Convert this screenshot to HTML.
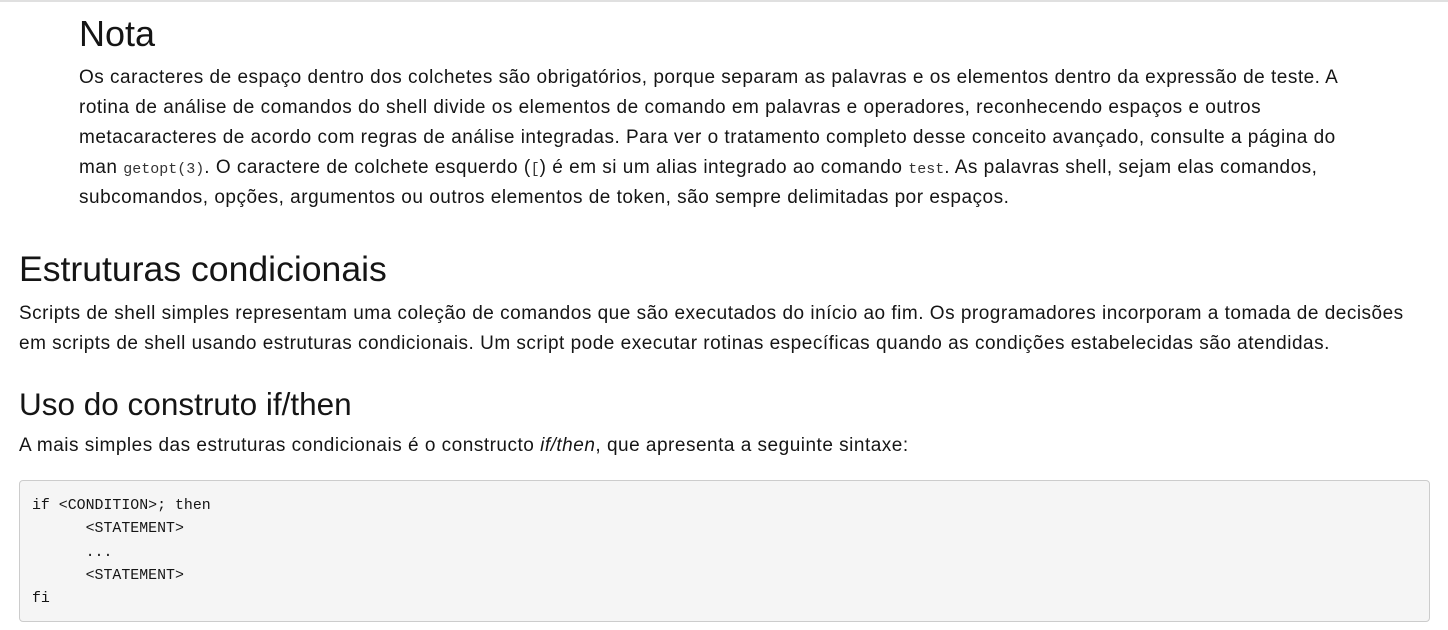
<!DOCTYPE html>
<html><head><meta charset="utf-8"><style>
body{margin:0;background:#fff;color:#151515;font-family:"Liberation Sans",sans-serif;width:1448px;height:630px;overflow:hidden;border-top:2px solid #e0e0e0;box-sizing:border-box;position:relative}
.l{position:absolute;white-space:nowrap;font-size:19px;letter-spacing:0.5px;line-height:30px}
h1,h2{position:absolute;margin:0;font-weight:400;white-space:nowrap}
code{font-family:"Liberation Mono",monospace;font-size:15px;color:#333;letter-spacing:0}
pre{position:absolute;left:19px;top:478px;width:1411px;height:142px;box-sizing:border-box;margin:0;background:#f5f5f5;border:1px solid #ccc;border-radius:4px;padding:14px 12px;font-family:"Liberation Mono",monospace;font-size:14.9px;line-height:23.3px;color:#151515}
</style></head><body>
<h1 style="left:79px;top:11px;font-size:36px">Nota</h1>
<div class="l" style="left:79px;top:61px">Os caracteres de espaço dentro dos colchetes são obrigatórios, porque separam as palavras e os elementos dentro da expressão de teste. A</div>
<div class="l" style="left:79px;top:91px">rotina de análise de comandos do shell divide os elementos de comando em palavras e operadores, reconhecendo espaços e outros</div>
<div class="l" style="left:79px;top:121px">metacaracteres de acordo com regras de análise integradas. Para ver o tratamento completo desse conceito avançado, consulte a página do</div>
<div class="l" style="left:79px;top:151px">man <code>getopt(3)</code>. O caractere de colchete esquerdo (<code>[</code>) é em si um alias integrado ao comando <code>test</code>. As palavras shell, sejam elas comandos,</div>
<div class="l" style="left:79px;top:181px">subcomandos, opções, argumentos ou outros elementos de token, são sempre delimitadas por espaços.</div>
<h1 style="left:19px;top:247px;font-size:35.6px">Estruturas condicionais</h1>
<div class="l" style="left:19px;top:297px">Scripts de shell simples representam uma coleção de comandos que são executados do início ao fim. Os programadores incorporam a tomada de decisões</div>
<div class="l" style="left:19px;top:327px">em scripts de shell usando estruturas condicionais. Um script pode executar rotinas específicas quando as condições estabelecidas são atendidas.</div>
<h2 style="left:19px;top:384px;font-size:31.5px">Uso do construto if/then</h2>
<div class="l" style="left:19px;top:429px">A mais simples das estruturas condicionais é o constructo <i>if/then</i>, que apresenta a seguinte sintaxe:</div>
<pre>if &lt;CONDITION&gt;; then
      &lt;STATEMENT&gt;
      ...
      &lt;STATEMENT&gt;
fi</pre>
</body></html>
